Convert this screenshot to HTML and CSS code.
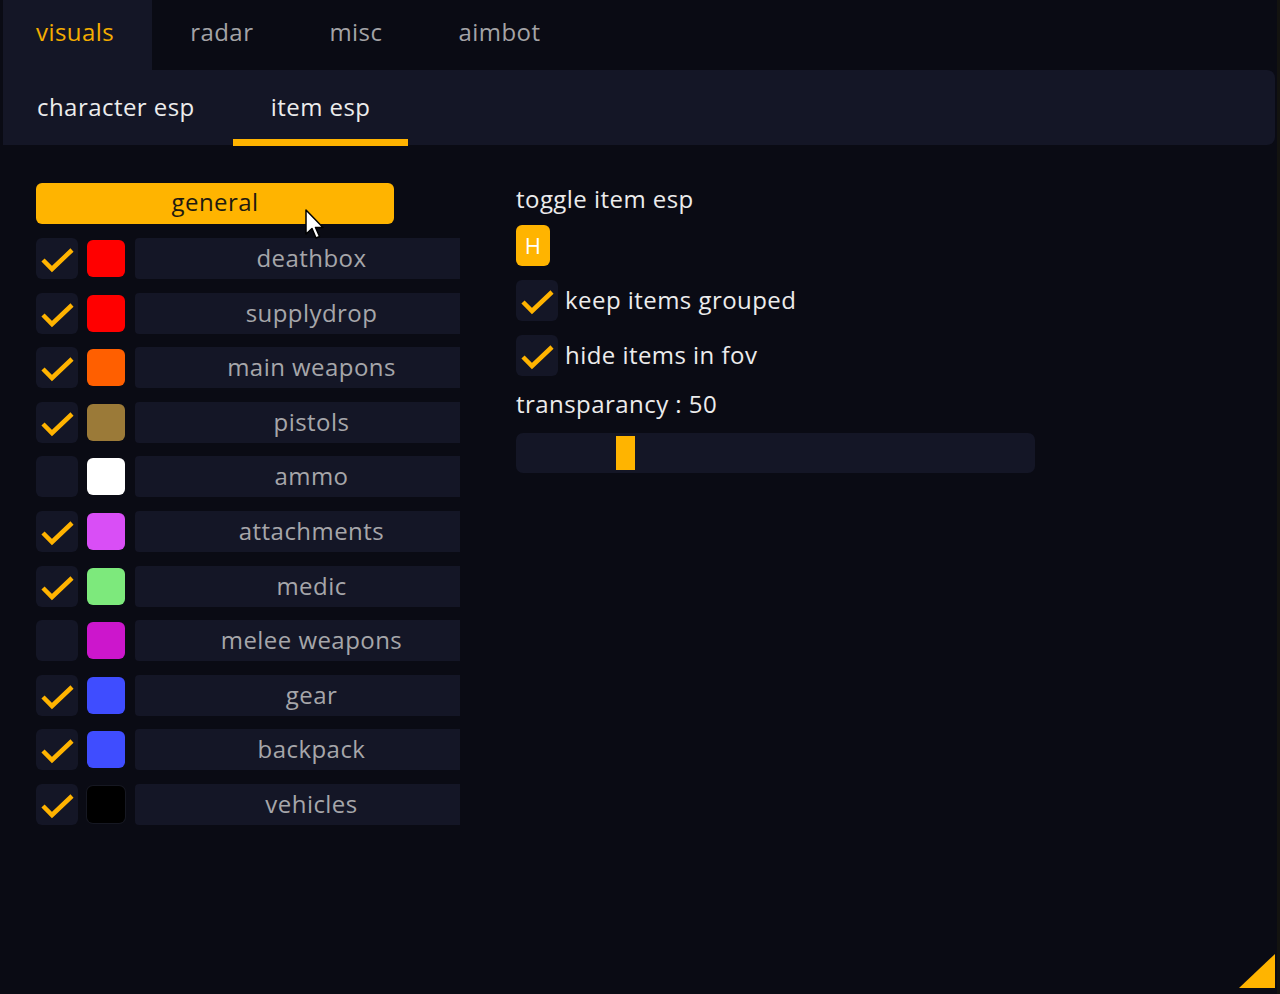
FILE: index.html
```html
<!DOCTYPE html>
<html>
<head>
<meta charset="utf-8">
<link rel="stylesheet" href="styles.css">
</head>
<body>
<div class="window">
  <nav class="tabs">
    <div class="tab active">visuals</div>
    <div class="tab">radar</div>
    <div class="tab">misc</div>
    <div class="tab">aimbot</div>
  </nav>
  <nav class="subtabs">
    <div class="subtab">character esp</div>
    <div class="subtab active">item esp</div>
  </nav>
  <main class="content">
    <section class="left">
      <button class="general">general</button>
      <div class="rows">
        <div class="row"><span class="check on"><svg viewBox="0 0 42 41"><path d="M7 22 L16 31 L36 12"/></svg></span><span class="swatch" style="background:#ff0000"></span><span class="label">deathbox</span></div>
        <div class="row"><span class="check on"><svg viewBox="0 0 42 41"><path d="M7 22 L16 31 L36 12"/></svg></span><span class="swatch" style="background:#ff0000"></span><span class="label">supplydrop</span></div>
        <div class="row"><span class="check on"><svg viewBox="0 0 42 41"><path d="M7 22 L16 31 L36 12"/></svg></span><span class="swatch" style="background:#ff5f00"></span><span class="label">main weapons</span></div>
        <div class="row"><span class="check on"><svg viewBox="0 0 42 41"><path d="M7 22 L16 31 L36 12"/></svg></span><span class="swatch" style="background:#9b7a38"></span><span class="label">pistols</span></div>
        <div class="row"><span class="check"></span><span class="swatch" style="background:#ffffff"></span><span class="label">ammo</span></div>
        <div class="row"><span class="check on"><svg viewBox="0 0 42 41"><path d="M7 22 L16 31 L36 12"/></svg></span><span class="swatch" style="background:#d94ef6"></span><span class="label">attachments</span></div>
        <div class="row"><span class="check on"><svg viewBox="0 0 42 41"><path d="M7 22 L16 31 L36 12"/></svg></span><span class="swatch" style="background:#7de97c"></span><span class="label">medic</span></div>
        <div class="row"><span class="check"></span><span class="swatch" style="background:#cc16cc"></span><span class="label">melee weapons</span></div>
        <div class="row"><span class="check on"><svg viewBox="0 0 42 41"><path d="M7 22 L16 31 L36 12"/></svg></span><span class="swatch" style="background:#3f4dff"></span><span class="label">gear</span></div>
        <div class="row"><span class="check on"><svg viewBox="0 0 42 41"><path d="M7 22 L16 31 L36 12"/></svg></span><span class="swatch" style="background:#3f4dff"></span><span class="label">backpack</span></div>
        <div class="row"><span class="check on"><svg viewBox="0 0 42 41"><path d="M7 22 L16 31 L36 12"/></svg></span><span class="swatch black" style="background:#000000"></span><span class="label">vehicles</span></div>
      </div>
    </section>
    <section class="right">
      <div class="title">toggle item esp</div>
      <div class="key">H</div>
      <div class="option"><span class="check on"><svg viewBox="0 0 42 41"><path d="M7 22 L16 31 L36 12"/></svg></span><span class="opt-text">keep items grouped</span></div>
      <div class="option"><span class="check on"><svg viewBox="0 0 42 41"><path d="M7 22 L16 31 L36 12"/></svg></span><span class="opt-text">hide items in fov</span></div>
      <div class="title slider-label">transparancy : 50</div>
      <div class="slider"><span class="thumb"></span></div>
    </section>
  </main>
  <svg class="cursor" width="24" height="36" viewBox="0 0 24 36"><path d="M1 1 L1 25 L7 19.5 L11 29 L14.5 27.5 L10.5 18.5 L18 18.5 Z" fill="#ffffff" stroke="#000000" stroke-width="1.5" stroke-linejoin="round"/></svg>
  <div class="resize"></div>
</div>
</body>
</html>
```

FILE: styles.css
```css
* { box-sizing: border-box; }
html, body {
  margin: 0;
  padding: 0;
  background: #0a0b14;
}
body {
  font-family: "Open Sans", "Noto Sans", sans-serif;
  font-size: 24px;
  letter-spacing: 0.45px;
}
.window {
  position: relative;
  width: 1280px;
  height: 994px;
  background: #0a0b14;
  border-right: 3px solid #131310;
  overflow: hidden;
}
.tabs {
  display: flex;
  height: 70px;
  padding-left: 3px;
}
.tab {
  display: flex;
  align-items: center;
  padding: 0 38px 8px 38px;
  color: #a3a3a6;
  height: 70px;
}
.tab.active {
  background: #141626;
  color: #f4ad00;
  padding-left: 33px;
}
.subtabs {
  display: flex;
  height: 75px;
  margin-left: 3px;
  margin-right: 2px;
  background: #141626;
  border-radius: 0 8px 8px 0;
}
.subtab {
  position: relative;
  display: flex;
  align-items: center;
  padding: 0 38px 2px 38px;
  color: #ececec;
}
.subtab:first-child { padding-left: 34px; }
.subtab.active::after {
  content: "";
  position: absolute;
  left: 0;
  right: 0;
  bottom: -1px;
  height: 7px;
  background: #ffb300;
}
.content {
  display: flex;
  padding: 38px 0 0 36px;
}
.left {
  width: 424px;
  display: flex;
  flex-direction: column;
  overflow: hidden;
  flex: none;
}
.general {
  width: 358px;
  height: 41px;
  border: none;
  border-radius: 6px;
  background: #ffb400;
  color: #1e1a10;
  font-family: inherit;
  font-size: 24px;
  letter-spacing: 0.45px;
  padding: 0 0 3px 0;
  line-height: 1;
}
.rows {
  display: flex;
  flex-direction: column;
  gap: 13.6px;
  margin-top: 14px;
}
.row {
  display: flex;
  align-items: center;
  height: 41px;
}
.check {
  width: 42px;
  height: 41px;
  border-radius: 6px;
  background: #141626;
  display: block;
  flex: none;
}
.check svg {
  width: 42px;
  height: 41px;
  display: block;
}
.check svg path {
  fill: none;
  stroke: #ffb300;
  stroke-width: 4.5;
  stroke-linecap: butt;
  stroke-linejoin: miter;
}
.swatch {
  width: 38px;
  height: 37px;
  margin-left: 9px;
  border-radius: 6px;
  flex: none;
}
.swatch.black { box-shadow: 0 0 0 1px #161822; }
.label {
  margin-left: 10px;
  flex: none;
  width: 353px;
  height: 41px;
  background: #141626;
  border-radius: 4px;
  color: #a6a6aa;
  display: flex;
  align-items: center;
  justify-content: center;
  padding-bottom: 2px;
}
.right {
  margin-left: 56px;
  display: flex;
  flex-direction: column;
  width: 519px;
}
.title {
  color: #ececec;
  height: 32px;
  line-height: 32px;
}
.key {
  margin-top: 10px;
  width: 34px;
  height: 41px;
  border-radius: 6px;
  background: #ffb400;
  color: #ffffff;
  display: flex;
  align-items: center;
  justify-content: center;
  font-size: 22px;
  padding-bottom: 2px;
}
.option {
  display: flex;
  align-items: center;
  height: 42px;
  margin-top: 13px;
}
.opt-text {
  margin-left: 7px;
  color: #ececec;
  padding-bottom: 2px;
}
.slider-label {
  margin-top: 12px;
}
.slider {
  margin-top: 13px;
  height: 40px;
  width: 519px;
  background: #141626;
  border-radius: 7px;
  display: flex;
  align-items: center;
  padding-left: 100px;
}
.thumb {
  width: 19px;
  height: 34px;
  background: #ffb400;
  display: block;
}
.cursor {
  position: absolute;
  left: 305px;
  top: 209px;
}
.resize {
  position: absolute;
  right: 2px;
  bottom: 6px;
  width: 36px;
  height: 34px;
  background: #ffb400;
  clip-path: polygon(100% 0, 100% 100%, 0 100%);
}
```
